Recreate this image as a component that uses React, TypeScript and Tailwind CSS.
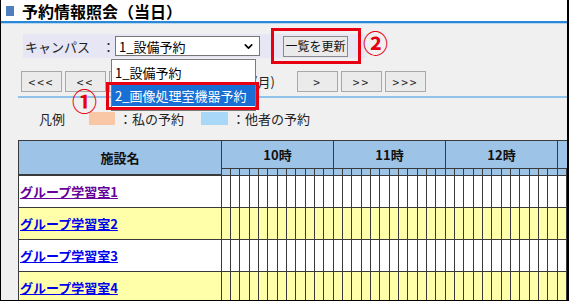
import React from "react";
import { ChevronDown } from "lucide-react";

const FONT = { fontFamily: '"Noto Sans CJK JP", "Noto Sans", sans-serif' };
const SUBW = [9, 9, 10, 9, 9, 10, 9, 9, 10, 9, 9, 10];
const HOURS = ["10時", "11時", "12時", ""];

function SubCells({ h, bg }: { h: string; bg: string }) {
  return (
    <div className="flex">
      {HOURS.map((hr, k) => (
        <div key={k} className="flex w-[112px] shrink-0">
          {SUBW.map((w, i) => (
            <div
              key={i}
              className={`${h} ${bg} shrink-0 border-r border-[#3a3a3a] ${w === 10 ? "w-[10px]" : "w-[9px]"}`}
            />
          ))}
        </div>
      ))}
    </div>
  );
}

function NavBtn({ label }: { label: string }) {
  return (
    <div className="flex h-[21px] w-[41px] shrink-0 items-center justify-center border border-[#a8a8a8] bg-[#ebebeb] text-[12px] leading-none tracking-[2px] text-[#222]">
      {label}
    </div>
  );
}

const ROOMS = [
  { name: "グループ学習室1", bg: "bg-white", color: "text-[#660099]" },
  { name: "グループ学習室2", bg: "bg-[#ffffaa]", color: "text-[#0000ee]" },
  { name: "グループ学習室3", bg: "bg-white", color: "text-[#0000ee]" },
  { name: "グループ学習室4", bg: "bg-[#ffffaa]", color: "text-[#0000ee]" },
];

export default function App() {
  return (
    <div className="h-[302px] w-[569px] bg-white" style={FONT}>
      <div className="relative h-[301px] w-[569px] overflow-hidden border-b border-l border-r-2 border-black bg-[#f0f0f0]">
        {/* title */}
        <div className="flex h-[21px] items-center bg-white pl-[5px]">
          <div className="h-[10px] w-[8px] bg-[#4f7fbf]" />
          <div className="ml-[8px] text-[16px] font-bold leading-none text-black">予約情報照会（当日）</div>
        </div>
        <div className="h-[2px] bg-[#2a88d6]" />
        <div className="h-[1px] bg-[#b7d6ef]" />

        {/* campus row */}
        <div className="ml-[22px] mt-[10px] flex h-[24px] w-[343px] items-center bg-[#e6e6f4]">
          <span className="ml-[2px] text-[13px] leading-none text-[#222]">キャンパス</span>
          <span className="ml-[12px] text-[13px] leading-none text-[#222]">：</span>
          <div className="flex h-[20px] w-[145px] items-center justify-between border border-[#767676] bg-white pl-[3px] pr-[4px]">
            <span className="text-[13px] leading-none text-black">1_設備予約</span>
            <ChevronDown size={13} strokeWidth={3} className="text-black" />
          </div>
          <div className="ml-[23px] flex h-[21px] w-[65px] items-center justify-center border border-[#8a8a8a] bg-[#eaeaea] text-[12px] leading-none text-[#111]">
            一覧を更新
          </div>
        </div>

        {/* nav row */}
        <div className="ml-[20px] mt-[13px] flex items-center">
          <NavBtn label="<<<" />
          <div className="ml-[3px]"><NavBtn label="<<" /></div>
          <div className="ml-[3px]"><NavBtn label="<" /></div>
          <span className="w-[125px] shrink-0 text-right text-[13px] leading-none text-[#222]">2024年4月1日(月)</span>
          <div className="ml-[22px]"><NavBtn label=">" /></div>
          <div className="ml-[3px]"><NavBtn label=">>" /></div>
          <div className="ml-[3px]"><NavBtn label=">>>" /></div>
        </div>
        <div className="ml-[17px] mt-[4px] h-[2px] bg-[#8fc3ea]" />

        {/* legend */}
        <div className="ml-[38px] mt-[14px] flex items-center text-[13px] leading-none text-[#222]">
          <span>凡例</span>
          <div className="ml-[24px] h-[13px] w-[26px] bg-[#f9c7a5]" />
          <span className="ml-[4px]">：私の予約</span>
          <div className="ml-[17px] h-[13px] w-[27px] bg-[#a9d7f7]" />
          <span className="ml-[4px]">：他者の予約</span>
        </div>

        {/* table */}
        <div className="ml-[17px] mt-[15px] w-[700px] border-l border-t border-[#3a3a3a]">
          <div className="flex">
            <div className="flex h-[35px] w-[203px] shrink-0 items-center justify-center border-b-2 border-r border-[#3a3a3a] bg-[#9dc3e6] text-[13px] font-bold text-[#111]">
              施設名
            </div>
            <div className="flex flex-col">
              <div className="flex">
                {HOURS.map((hr, k) => (
                  <div
                    key={k}
                    className="flex h-[28px] w-[112px] shrink-0 items-center justify-center border-b border-r border-[#3a3a3a] bg-[#9dc3e6] text-[13px] font-bold text-[#111]"
                  >
                    {hr}
                  </div>
                ))}
              </div>
              <div className="border-b border-[#3a3a3a]">
                <SubCells h="h-[6px]" bg="bg-[#9dc3e6]" />
              </div>
            </div>
          </div>
          {ROOMS.map((r) => (
            <div key={r.name} className="flex border-b border-[#3a3a3a]">
              <div className={`flex h-[31px] w-[203px] shrink-0 items-center border-r border-[#3a3a3a] pl-[1px] ${r.bg}`}>
                <span className={`text-[13px] font-bold underline ${r.color}`}>{r.name}</span>
              </div>
              <SubCells h="h-[31px]" bg={r.bg} />
            </div>
          ))}
        </div>

        {/* annotations */}
        <div className="absolute left-[110px] top-[59px] h-[52px] w-[145px] border border-[#7a7a7a] bg-white">
          <div className="flex h-[24px] items-center pl-[3px] text-[13px] leading-none text-black">1_設備予約</div>
          <div className="flex h-[22px] items-center bg-[#1a6fd4] pl-[3px] text-[13px] leading-none text-white">
            2_画像処理室機器予約
          </div>
        </div>
        <div className="absolute left-[105px] top-[82px] h-[28px] w-[153px] border-[3px] border-[#e60012]" />
        <div className="absolute left-[270px] top-[28px] h-[36px] w-[90px] border-[3px] border-[#e60012]" />
        <div className="absolute left-[362px] top-[30px] text-[25px] font-bold leading-none text-[#e60012]">②</div>
        <div className="absolute left-[71px] top-[88px] text-[25px] font-bold leading-none text-[#e60012]">①</div>
      </div>
    </div>
  );
}
